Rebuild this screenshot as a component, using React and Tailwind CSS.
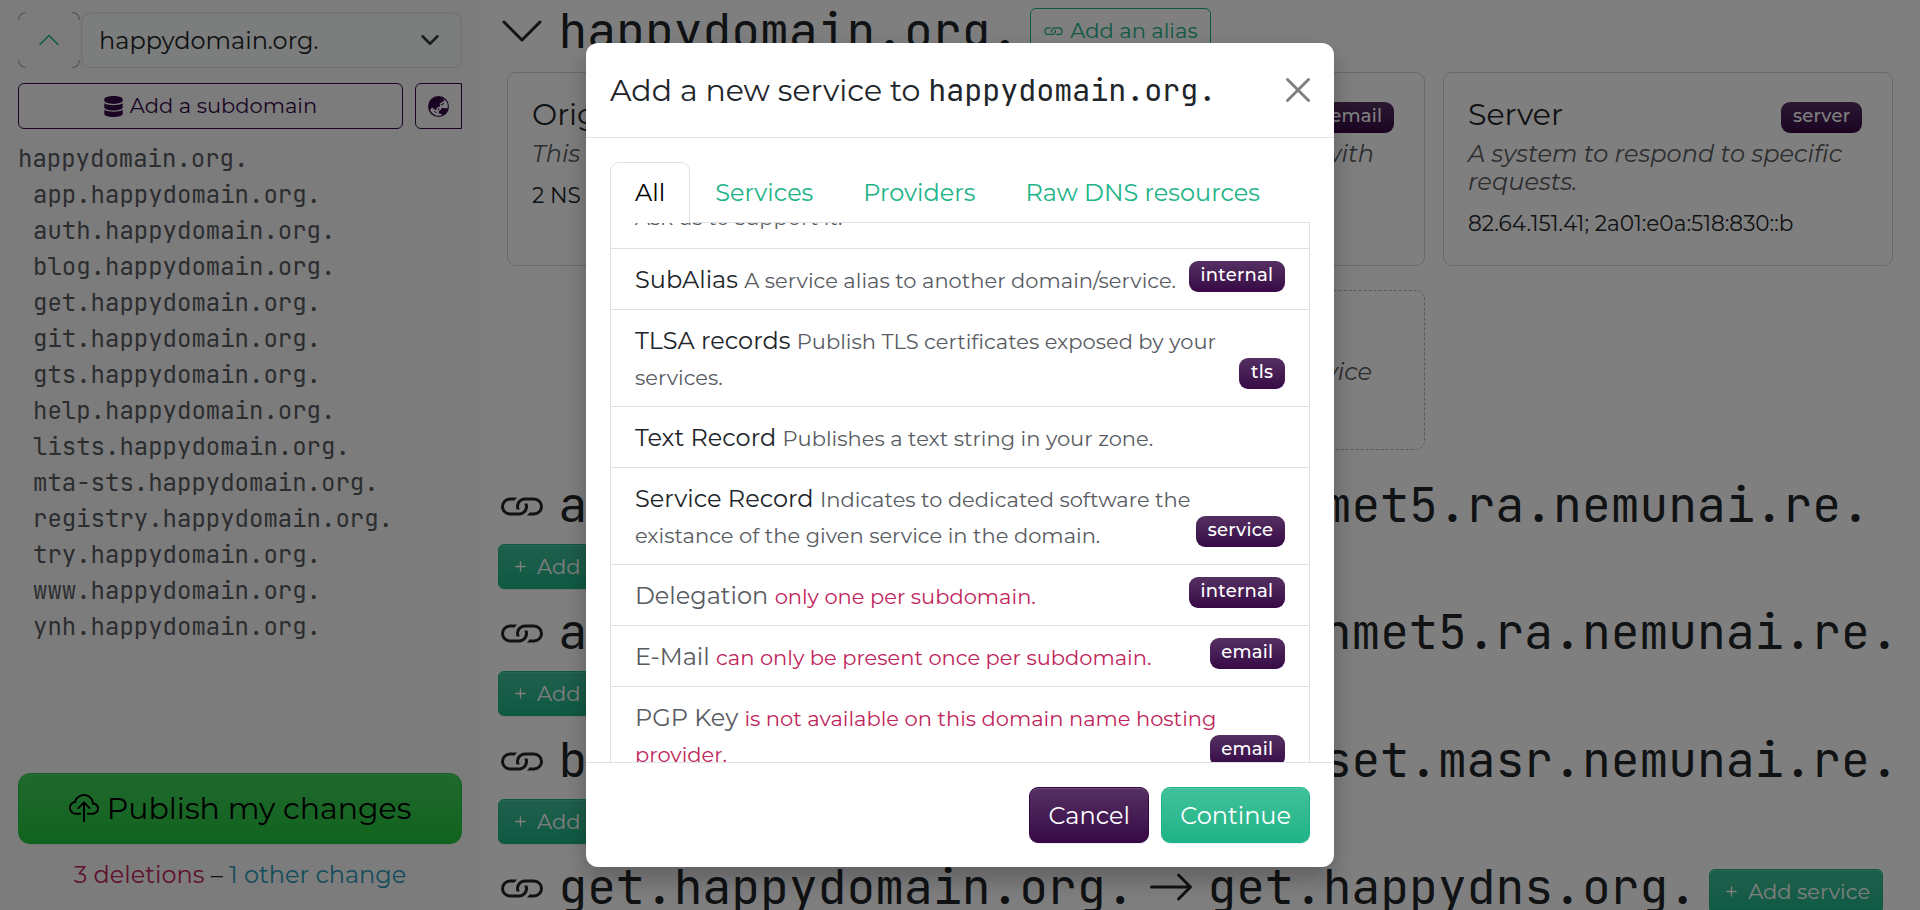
import React from "react";
import {
  BsArrowRight,
  BsChevronDown,
  BsChevronUp,
  BsCloudUpload,
  BsGlobeAsiaAustralia,
  BsLink,
  BsPlus,
} from "react-icons/bs";
import { FaDatabase } from "react-icons/fa";

const MONO = "font-['JetBrains_Mono','DejaVu_Sans_Mono',monospace]";

const subdomains = [
  "app", "auth", "blog", "get", "git", "gts", "help", "lists", "mta-sts", "registry", "try", "www", "ynh",
];

const aliases = [
  { name: "app", target: "srvhmet5.ra.nemunai.re." },
  { name: "auth", target: "srvhmet5.ra.nemunai.re." },
  { name: "blog", target: "corset.masr.nemunai.re." },
];

const services = [
  { name: "SubAlias", text: "A service alias to another domain/service.", badge: "internal" },
  { name: "TLSA records", text: "Publish TLS certificates exposed by your services.", badge: "tls" },
  { name: "Text Record", text: "Publishes a text string in your zone." },
  { name: "Service Record", text: "Indicates to dedicated software the existance of the given service in the domain.", badge: "service" },
  { name: "Delegation", text: "only one per subdomain.", badge: "internal", disabled: true },
  { name: "E-Mail", text: "can only be present once per subdomain.", badge: "email", disabled: true },
  { name: "PGP Key", text: "is not available on this domain name hosting provider.", badge: "email", disabled: true },
];

function Badge({ children, className = "" }) {
  return (
    <span className={`inline-block rounded-[9px] bg-linear-to-b from-[#553062] to-[#370846] px-[11.7px] pt-[5.3px] pb-[7.3px] text-[18px] leading-[18px] font-medium tracking-[0.25px] text-white ${className}`}>
      {children}
    </span>
  );
}

function AddServiceButton({ className = "" }) {
  return (
    <button className={`flex h-[45px] w-[174px] shrink-0 items-center rounded-md border border-[#1cb487] bg-linear-to-b from-[#3ebf99] to-[#1cb487] pl-[11px] text-[21px] text-white shadow-[inset_0_1px_0_rgba(255,255,255,.15),0_1px_1px_rgba(0,0,0,.075)] ${className}`}>
      <BsPlus className="mr-[6px] size-[21px]" />
      Add service
    </button>
  );
}

function Heading({ icon, name, target, children }) {
  return (
    <div className="flex h-[58px] items-center text-[48px] leading-[58px] whitespace-nowrap text-[#212529]">
      {icon}
      <span className={`ml-[12.5px] ${MONO}`}>{name}</span>
      {target && (
        <>
          <BsArrowRight className="mx-[12.5px] size-[48px] shrink-0" />
          <span className={MONO}>{target}</span>
        </>
      )}
      {children}
    </div>
  );
}

function Card({ title, text, badge, value }) {
  return (
    <div className="h-[194px] w-[450px] rounded-[9px] border border-[#d3d3d3] px-[24px] pt-[24px]">
      <div className="flex h-[43px] justify-between">
        <h5 className="text-[30px] leading-[36px]">{title}</h5>
        {badge && <Badge className="mt-[5px] mr-[6px] self-start">{badge}</Badge>}
      </div>
      <p className="text-[24px] leading-[28px] tracking-[0.05px] text-[#585b5f] italic">{text}</p>
      <p className="mt-[11px] text-[21.6px] leading-[33px]">{value}</p>
    </div>
  );
}

function Sidebar() {
  return (
    <aside className="flex h-full w-[480px] shrink-0 flex-col bg-[#f8f9fa] px-[18px] pt-[12px]">
      <div className="flex h-[56px]">
        <button className="relative flex w-[62px] items-center justify-center text-[#1cb487]">
          <span className="absolute top-0 left-0 size-[8px] rounded-tl-[8px] border-t border-l border-[#9da1a5]" />
          <span className="absolute top-0 right-0 size-[8px] rounded-tr-[8px] border-t border-r border-[#9da1a5]" />
          <span className="absolute bottom-0 left-0 size-[8px] rounded-bl-[8px] border-b border-l border-[#9da1a5]" />
          <span className="absolute right-0 bottom-0 size-[8px] rounded-br-[8px] border-r border-b border-[#9da1a5]" />
          <BsChevronUp className="size-[24px]" />
        </button>
        <div className="ml-[1px] flex flex-1 items-center justify-between rounded-[9px] border border-[#dee2e6] bg-[#f9fafb] pr-[21px] pl-[17px] text-[24px] shadow-[inset_0_1px_2px_rgba(0,0,0,.075)]">
          <span className="pt-[1px]">happydomain.org.</span>
          <svg viewBox="0 0 16 16" className="size-[20px]" fill="none" stroke="#343a40" strokeLinecap="round" strokeLinejoin="round" strokeWidth="2">
            <path d="m2 5 6 6 6-6" />
          </svg>
        </div>
      </div>
      <div className="mt-[15px] flex h-[46px] gap-[12px] text-[#370846]">
        <button className="flex flex-1 items-center justify-center gap-[7px] rounded-md border border-[#370846] text-[21px]">
          <FaDatabase className="h-[21px] w-[19px]" />
          Add a subdomain
        </button>
        <button className="flex w-[47px] items-center justify-center rounded-l-md border border-[#370846]">
          <BsGlobeAsiaAustralia className="size-[21px]" />
        </button>
      </div>
      <ul className={`mt-[12px] flex-1 text-[24px] leading-[36px] text-[#585b5f] ${MONO}`}>
        <li>happydomain.org.</li>
        {subdomains.map((s) => (
          <li key={s} className="pl-[15px]">{s}.happydomain.org.</li>
        ))}
      </ul>
      <button className="flex h-[71px] shrink-0 items-center justify-center gap-[8px] rounded-xl border border-[#22c83c] bg-linear-to-b from-[#40d05c] to-[#20c83a] text-[30px] text-black shadow-[inset_0_1px_0_rgba(255,255,255,.15),0_1px_1px_rgba(0,0,0,.075)]">
        <BsCloudUpload className="size-[30px]" />
        Publish my changes
      </button>
      <p className="mt-[13px] mb-[17px] text-center text-[24px] leading-[36px]">
        <span className="text-[#c0245c]">3 deletions</span> – <span className="text-[#2899b8]">1 other change</span>
      </p>
    </aside>
  );
}

function Zone() {
  return (
    <main className="min-w-0 flex-1 overflow-hidden bg-white px-[18px] pt-[2px]">
      <Heading icon={<BsChevronDown className="size-[48px] shrink-0" />} name="happydomain.org.">
        <button className="ml-[11px] flex h-[46px] items-center gap-[6px] rounded-md border border-[#1cb487] px-[12px] pb-[2px] text-[21px] leading-none text-[#1cb487]">
          <BsLink className="size-[21px]" />
          Add an alias
        </button>
      </Heading>
      <div className="mt-[12px] grid grid-cols-[450px_450px_450px] gap-x-[18px] gap-y-[24px] pl-[9px]">
        <Card title="Origin" text="This is the root of your domain." value="2 NS" />
        <Card title="E-Mail" text={<span className="block pr-[26px] text-right">Send and receive e-mail with</span>} badge="email" />
        <Card title="Server" text="A system to respond to specific requests." badge="server" value="82.64.151.41; 2a01:e0a:518:830::b" />
        <div className="col-start-2 flex h-[160px] items-center justify-end rounded-[9px] border border-dashed border-[#b4b4b4] pt-[4px] pr-[52px] text-[24px] text-[#585b5f] italic">
          Add a new service
        </div>
      </div>
      <div className="pt-[26px]">
        {aliases.map((a) => (
          <div key={a.name} className="h-[127.45px]">
            <Heading icon={<BsLink className="size-[48px] shrink-0" />} name={`${a.name}.happydomain.org.`} target={a.target} />
            <AddServiceButton className="mt-[10px]" />
          </div>
        ))}
        <Heading icon={<BsLink className="size-[48px] shrink-0" />} name="get.happydomain.org." target="get.happydns.org.">
          <AddServiceButton className="mt-[9px] ml-[12px] leading-none" />
        </Heading>
      </div>
    </main>
  );
}

function Modal() {
  return (
    <div className="flex h-[824px] w-[748px] flex-col rounded-xl bg-white shadow-[0_12px_24px_rgba(0,0,0,.25)]">
      <header className="flex h-[95px] shrink-0 items-center justify-between border-b border-[#dee2e6] px-[24px]">
        <h5 className="text-[30px] leading-[45px] whitespace-pre">
          Add a new service to <span className={MONO}>happydomain.org.</span>
        </h5>
        <svg viewBox="0 0 16 16" className="size-[24px] text-[#7f7f7f]" fill="none" stroke="currentColor" strokeWidth="1.9" strokeLinecap="round">
          <path d="M1 1l14 14M15 1L1 15" />
        </svg>
      </header>
      <div className="flex min-h-0 flex-1 flex-col px-[24px] pt-[24px]">
        <nav className="relative z-10 flex h-[61px] shrink-0 border-b border-[#dee2e6] text-[24px] leading-[36px] text-[#1cb487]">
          <a className="h-[61px] rounded-t-[9px] border border-b-0 border-[#dee2e6] bg-white px-[24px] pt-[12px] text-black">All</a>
          <a className="px-[25px] pt-[13px]">Services</a>
          <a className="px-[25px] pt-[13px]">Providers</a>
          <a className="px-[25px] pt-[13px]">Raw DNS resources</a>
        </nav>
        <div className="flex min-h-0 flex-1 flex-col justify-start overflow-hidden border-x border-[#dee2e6] text-[24px] leading-[36px]">
          <div className="mt-[-23px] h-[49px] shrink-0 border-b border-[#dee2e6] px-[24px] text-[21px] text-[#585b5f]">
            Ask us to support it.
          </div>
          {services.map((s) => (
            <div key={s.name} className="flow-root shrink-0 border-b border-[#dee2e6] px-[24px] pt-[13px] pb-[11px]">
              <span className={s.disabled ? "text-[#585b5f]" : ""}>{s.name}</span>{" "}
              <span className={s.disabled ? "text-[21px] leading-none text-[#c0245c]" : "text-[21px] leading-none text-[#585b5f]"}>{s.text}</span>
              {s.badge && <Badge className="float-right mt-[-1px]">{s.badge}</Badge>}
            </div>
          ))}
        </div>
      </div>
      <footer className="flex h-[105px] shrink-0 items-start justify-end gap-[12px] border-t border-[#dee2e6] p-[24px] text-[24px] text-white">
        <button className="h-[56px] w-[120px] rounded-[9px] border border-[#370846] bg-linear-to-b from-[#553062] to-[#370846] pt-[1px] shadow-[inset_0_1px_0_rgba(255,255,255,.15),0_1px_1px_rgba(0,0,0,.075)]">Cancel</button>
        <button className="h-[56px] rounded-[9px] border border-[#1cb487] bg-linear-to-b from-[#40c09a] to-[#1cb487] px-[18px] pt-[1px] shadow-[inset_0_1px_0_rgba(255,255,255,.15),0_1px_1px_rgba(0,0,0,.075)]">Continue</button>
      </footer>
    </div>
  );
}

export default function App() {
  return (
    <div className="relative h-[910px] w-[1920px] overflow-hidden font-['Montserrat','Inter',sans-serif] font-normal text-[#212529]">
      <div className="flex h-full">
        <Sidebar />
        <Zone />
      </div>
      <div className="absolute inset-0 flex justify-center bg-black/50 pt-[43px]">
        <Modal />
      </div>
    </div>
  );
}
